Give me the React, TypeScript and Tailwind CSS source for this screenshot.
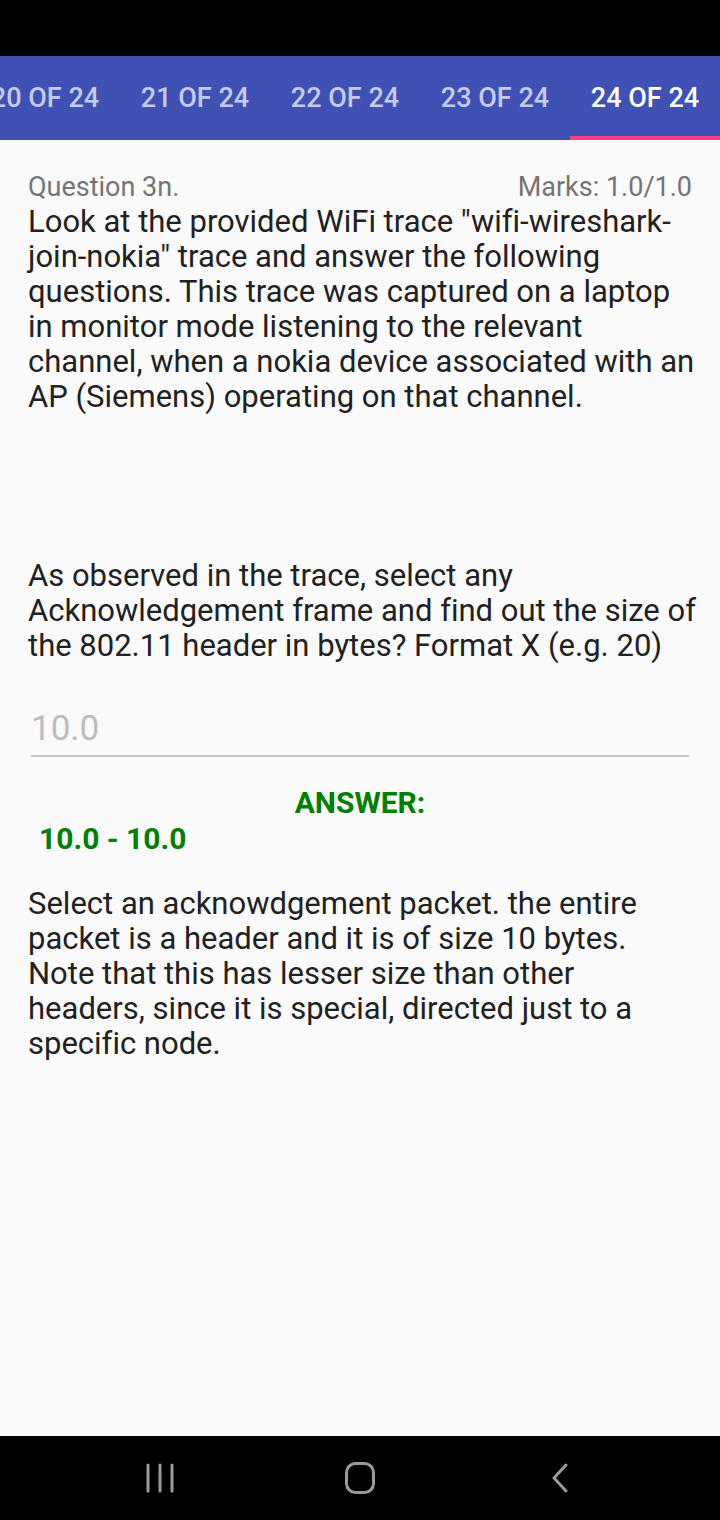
import React from 'react';

const TABS = ['20 OF 24', '21 OF 24', '22 OF 24', '23 OF 24', '24 OF 24'];

function NavBar() {
  return (
    <div className="h-[84px] bg-black flex items-center pl-[140px] gap-[160px] shrink-0">
      <div className="w-[40px] flex justify-center">
        <svg width="28" height="30" viewBox="0 0 28 30" className="text-[#9a9a9a]">
          <path d="M2 2v26M14 2v26M26 2v26" stroke="currentColor" strokeWidth="3" strokeLinecap="round" />
        </svg>
      </div>
      <div className="w-[40px] flex justify-center">
        <svg width="30" height="32" viewBox="0 0 30 32" className="text-[#9a9a9a]">
          <rect x="1.5" y="1.5" width="27" height="29" rx="9" fill="none" stroke="currentColor" strokeWidth="3" />
        </svg>
      </div>
      <div className="w-[40px] flex justify-center">
        <svg width="18" height="30" viewBox="0 0 18 30" className="text-[#9a9a9a]">
          <path d="M15 2L3 15l12 13" fill="none" stroke="currentColor" strokeWidth="3" strokeLinecap="round" strokeLinejoin="round" />
        </svg>
      </div>
    </div>
  );
}

export default function App() {
  return (
    <div
      className="w-[720px] h-[1520px] flex flex-col bg-[#fafafa] overflow-hidden [font-variant-ligatures:none]"
      style={{ fontFamily: 'Roboto, "Noto Sans", sans-serif' }}
    >
      <div className="h-[56px] bg-black shrink-0" />
      <div className="h-[84px] bg-[#3f51b5] flex shrink-0 overflow-hidden">
        <div className="flex ml-[-30px]">
          {TABS.map((t, i) => {
            const active = i === TABS.length - 1;
            return (
              <div key={t} className="w-[150px] h-[84px] flex flex-col">
                <div className={`flex-1 pt-[4px] flex items-center justify-center text-[27px] font-medium whitespace-nowrap ${active ? 'text-white' : 'text-[#c5cae9]'}`}>{t}</div>
                <div className={`h-[4px] ${active ? 'bg-[#ff4081]' : ''}`} />
              </div>
            );
          })}
        </div>
      </div>

      <div className="flex-1 px-[28px] pt-[30px] text-[#212121]">
        <div className="flex justify-between text-[27px] leading-[34px] text-[#757575]">
          <span>Question 3n.</span>
          <span>Marks: 1.0/1.0</span>
        </div>
        <p className="text-[31px] leading-[35px] mr-[-8px]">
          Look at the provided WiFi trace "wifi-wireshark-join-nokia" trace and answer the following questions. This trace was captured on a laptop in monitor mode listening to the relevant channel, when a nokia device associated with an AP (Siemens) operating on that channel.
        </p>
        <p className="text-[31px] leading-[35px] mt-[144px] mr-[-28px]">
          As observed in the trace, select any Acknowledgement frame and find out the size of the 802.11 header in bytes? Format X (e.g. 20)
        </p>
        <div className="mx-[3px] mt-[46px] pb-[6px] border-b-2 border-[#c6c6c6] text-[35px] leading-[40px] text-[#bdbdbd]">10.0</div>
        <div className="mt-[29px] text-center text-[30px] leading-[34px] font-bold text-[#008000]">ANSWER:</div>
        <div className="pl-[11px] text-[30px] leading-[38px] font-bold text-[#008000]">10.0 - 10.0</div>
        <p className="text-[31px] leading-[35px] mt-[28px]">
          Select an acknowdgement packet. the entire packet is a header and it is of size 10 bytes. Note that this has lesser size than other headers, since it is special, directed just to a specific node.
        </p>
      </div>

      <NavBar />
    </div>
  );
}
